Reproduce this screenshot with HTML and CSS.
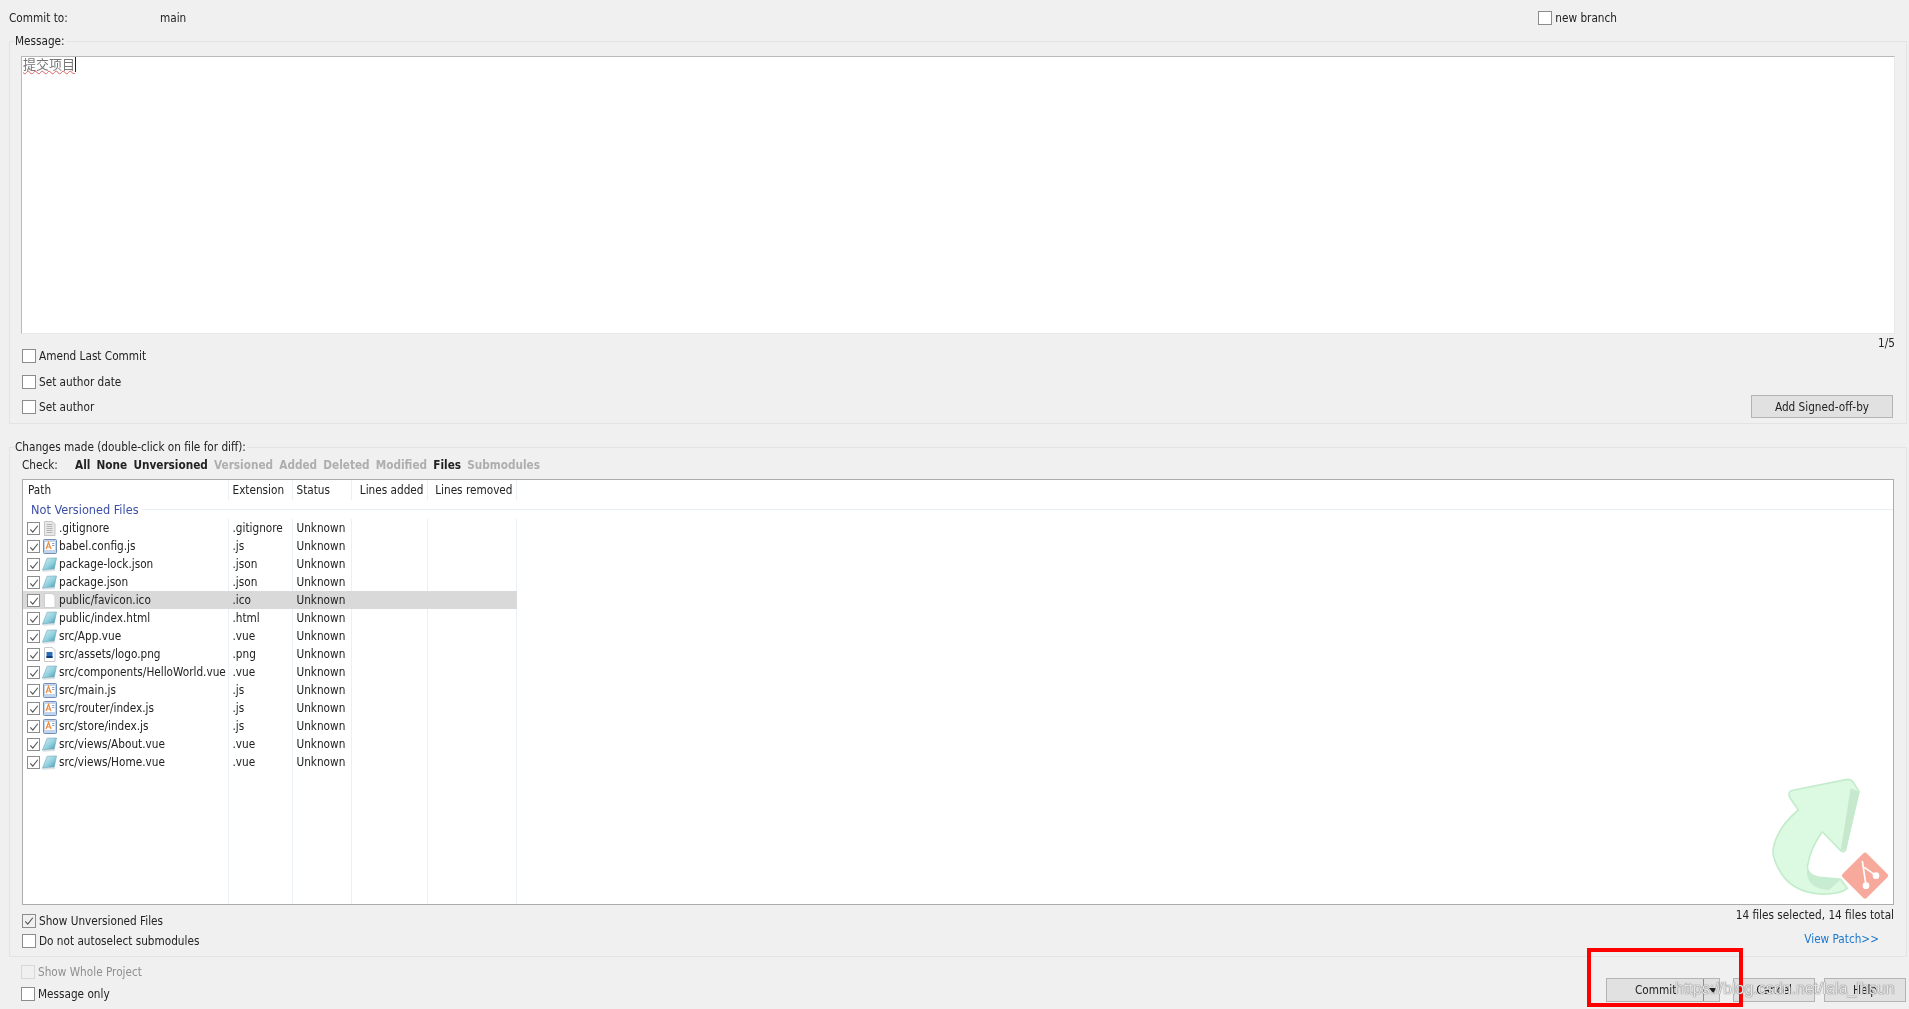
FILE: index.html
```html
<!DOCTYPE html>
<html lang="en">

<head>
    <meta charset="UTF-8">
    <title>Commit</title>
    <link rel="stylesheet" href="styles.css">
</head>

<body>
    <svg class="defs" width="0" height="0">
        <defs>
            <linearGradient id="teal" x1="0" y1="0" x2="1" y2="1">
                <stop offset="0" stop-color="#d8f0f5" />
                <stop offset="0.55" stop-color="#8fd0de" />
                <stop offset="1" stop-color="#3f93ad" />
            </linearGradient>
        </defs>
        <symbol id="tick" viewBox="0 0 13 13">
            <path d="M2.5 6.8 5.2 9.8 10.6 3" fill="none" stroke="#555" stroke-width="1.2" />
        </symbol>
        <symbol id="i-doc" viewBox="0 0 15 15">
            <path d="M2.500 .5h7.500l3 2.500v11.500H2.500z" fill="#e9e9e9" stroke="#c4c4c4" />
            <path d="M4.500 3.500h6M4.500 5.500h6M4.500 7.500h6M4.500 9.500h6M4.500 11.500h6" stroke="#b5b5b5" />
        </symbol>
        <symbol id="i-js" viewBox="0 0 15 15">
            <rect x="1.500" y=".5" width="13" height="14" rx="1" fill="#c3d5ea" stroke="#6f8fb8" />
            <rect x="3" y="3" width="10" height="8" fill="#fff" />
            <path d="M4 10 6.500 3.500 9 10M5 8h3" fill="none" stroke="#ee8a3a" stroke-width="1.2" />
            <path d="M10 4.500h2.500M10 6.500h2.500" stroke="#8aa6c8" />
        </symbol>
        <symbol id="i-vue" viewBox="0 0 16 15">
            <path d="M5.500 .8 15.500 .5 13 12.500 .5 13.500z" fill="url(#teal)" stroke="#6d9fb2" stroke-width=".6" />
            <path d="M.5 13.500 13 12.500 13.500 14 1.500 14.800z" fill="#e4ecf0" stroke="#a9bcc6" stroke-width=".4" />
        </symbol>
        <symbol id="i-ico" viewBox="0 0 15 15">
            <path d="M2.500 .5h7.500l3 2.500v11.500H2.500z" fill="#fff" stroke="#cfcfcf" />
        </symbol>
        <symbol id="i-png" viewBox="0 0 15 15">
            <path d="M2.500 .5h7.500l3 2.500v11.500H2.500z" fill="#fff" stroke="#c9c9c9" />
            <rect x="4.500" y="5" width="6" height="6" fill="#2a6fb5" />
            <rect x="4.500" y="9" width="6" height="2" fill="#123f78" />
        </symbol>
    </svg>

    <div class="commit-row">
        <span class="commit-label">Commit to:</span>
        <span class="branch">main</span>
        <label class="opt new-branch"><span class="box"></span>new branch</label>
    </div>

    <fieldset class="group group-message">
        <legend>Message:</legend>
        <div class="message-box"><span class="typed">提交项目</span><span class="caret"></span></div>
        <div class="counter">1/5</div>
        <div class="message-foot">
            <div class="opts">
                <label class="opt"><span class="box"></span>Amend Last Commit</label>
                <label class="opt"><span class="box"></span>Set author date</label>
                <label class="opt"><span class="box"></span>Set author</label>
            </div>
            <button class="btn btn-sign">Add Signed-off-by</button>
        </div>
    </fieldset>

    <fieldset class="group group-changes">
        <legend>Changes made (double-click on file for diff):</legend>
        <div class="filter">
            <span class="filter-label">Check:</span>
            <b>All</b>
            <b>None</b>
            <b>Unversioned</b>
            <b class="off">Versioned</b>
            <b class="off">Added</b>
            <b class="off">Deleted</b>
            <b class="off">Modified</b>
            <b>Files</b>
            <b class="off">Submodules</b>
        </div>
        <div class="list">
            <table class="files">
                <colgroup>
                    <col class="c-path">
                    <col class="c-ext">
                    <col class="c-status">
                    <col class="c-added">
                    <col class="c-removed">
                    <col>
                </colgroup>
                <tbody>
                    <tr class="head">
                        <td class="h-path">Path</td>
                        <td>Extension</td>
                        <td>Status</td>
                        <td class="num">Lines added</td>
                        <td class="num">Lines removed</td>
                        <td></td>
                    </tr>
                    <tr class="section">
                        <td colspan="6"><div class="section-in"><span>Not Versioned Files</span><i></i></div></td>
                    </tr>
                </tbody>
                <tbody id="rows"></tbody>
                <tbody>
                    <tr class="filler"><td></td><td></td><td></td><td></td><td></td><td></td></tr>
                </tbody>
            </table>
            <svg class="logo" viewBox="0 0 462 432" width="154" height="144">
                <path d="M150 100Q152 92 165 90L325 58Q338 58 345 70L360 95 320 268Q315 280 305 272L250 215Q215 262 205 320 205 345 240 352L305 358 325 385Q300 405 240 402 165 395 130 345 100 300 102 270 112 205 178 150L152 112Z" fill="#dcf9e1" stroke="#c3eccb" stroke-width="5" />
                <path d="M360 95 320 268 305 272 335 85Z" fill="#c6e8cd" />
                <path d="M205 320Q205 345 240 352L305 358 270 390Q195 385 205 320Z" fill="#c8ecd0" />
                <rect x="327" y="296" width="102" height="102" rx="8" transform="rotate(45 378 347)" fill="#f7a99b" />
                <path d="M370 303 381 376M376 322 411 347" stroke="#fff" stroke-width="5" fill="none" />
                <circle cx="381" cy="377" r="10" fill="#fff" />
                <circle cx="411" cy="347" r="10" fill="#fff" />
            </svg>
        </div>
        <div class="changes-foot">
            <div class="opts-tight">
                <label class="opt"><span class="box on"><svg><use href="#tick" /></svg></span>Show Unversioned Files</label>
                <label class="opt"><span class="box"></span>Do not autoselect submodules</label>
            </div>
            <div class="stats">
                <div>14 files selected, 14 files total</div>
                <a class="patch">View Patch&gt;&gt;</a>
            </div>
        </div>
    </fieldset>

    <div class="footer">
        <div class="foot-opts">
            <label class="opt disabled"><span class="box"></span>Show Whole Project</label>
            <label class="opt"><span class="box"></span>Message only</label>
        </div>
        <div class="buttons">
            <button class="btn btn-commit"><span class="btn-main">Commit</span><span class="btn-arrow"></span></button>
            <button class="btn btn-cancel">Cancel</button>
            <button class="btn btn-help">Help</button>
        </div>
    </div>

    <div class="red-mark"></div>
    <div class="watermark">https://blog.csdn.net/lala_lhsun</div>

    <script>
        var files = [
            ['.gitignore', '.gitignore', 'i-doc'],
            ['babel.config.js', '.js', 'i-js'],
            ['package-lock.json', '.json', 'i-vue'],
            ['package.json', '.json', 'i-vue'],
            ['public/favicon.ico', '.ico', 'i-ico'],
            ['public/index.html', '.html', 'i-vue'],
            ['src/App.vue', '.vue', 'i-vue'],
            ['src/assets/logo.png', '.png', 'i-png'],
            ['src/components/HelloWorld.vue', '.vue', 'i-vue'],
            ['src/main.js', '.js', 'i-js'],
            ['src/router/index.js', '.js', 'i-js'],
            ['src/store/index.js', '.js', 'i-js'],
            ['src/views/About.vue', '.vue', 'i-vue'],
            ['src/views/Home.vue', '.vue', 'i-vue']
        ];
        var html = '';
        for (var i = 0; i < files.length; i++) {
            var f = files[i];
            html += '<tr class="' + (i == 4 ? 'row picked' : 'row') + '">' +
                '<td class="pathcell"><div class="pathin"><span class="box small"><svg><use href="#tick" /></svg></span>' +
                '<svg class="ficon"><use href="#' + f[2] + '" /></svg><span>' + f[0] + '</span></div></td>' +
                '<td>' + f[1] + '</td><td>Unknown</td><td></td><td></td><td class="rest"></td></tr>';
        }
        document.getElementById('rows').innerHTML = html;
    </script>
</body>

</html>
```

FILE: styles.css
```css
* {
    box-sizing: border-box;
    padding: 0;
    margin: 0;
}

html,
body {
    height: 100%;
    width: 100%;
    overflow: hidden;
}

body {
    background: #f0f0f0;
    color: #222;
    font-family: "DejaVu Sans Condensed", "DejaVu Sans", "Noto Sans CJK SC", sans-serif;
    font-size: 11.7px;
    line-height: 16px;
    padding: 0 2px 0 9px;
    position: relative;
    filter: blur(0.35px);
}

.defs {
    position: absolute;
}

.commit-row {
    height: 33px;
    display: flex;
    align-items: center;
    padding-top: 3px;
}

.commit-label {
    width: 151px;
}

.new-branch {
    margin-left: auto;
    margin-right: 290px;
}

.opt {
    display: flex;
    align-items: center;
    height: 16px;
}

.box {
    width: 14px;
    height: 14px;
    border: 1px solid #8c8c8c;
    background: #fff;
    margin-right: 3px;
    flex: none;
    display: block;
}

.box svg {
    display: block;
    width: 12px;
    height: 12px;
}

.box.on {
    background: #f0f0f0;
}

.box.small {
    width: 13px;
    height: 13px;
    margin-right: 2px;
}

.group {
    border: 1px solid #e3e3e3;
    min-width: 0;
    padding: 0 11px;
}

.group legend {
    margin-left: -7px;
    padding: 0 1px;
    height: 16px;
    line-height: 17px;
}

.group-message {
    height: 391px;
}

.message-box {
    height: 278px;
    margin-top: 7px;
    background: #fff;
    border: 1px solid #b9b9b9;
    border-bottom-color: #e8e8e8;
    border-right-color: #e8e8e8;
    padding: 0 0 0 1px;
    font-family: "Noto Sans CJK SC", sans-serif;
    font-size: 13px;
    line-height: 14px;
    color: #777;
    display: flex;
    align-items: flex-start;
}

.typed {
    text-decoration: underline wavy #e06060 1px;
}

.caret {
    width: 1px;
    height: 15px;
    background: #222;
}

.counter {
    height: 14px;
    text-align: right;
    line-height: 18px;
}

.message-foot {
    display: flex;
    justify-content: space-between;
    align-items: flex-start;
}

.opts {
    display: flex;
    flex-direction: column;
    gap: 9.500px;
    padding-left: 1px;
}

.btn {
    font: inherit;
    color: #222;
    background: #e1e1e1;
    border: 1px solid #b4b4b4;
}

.btn-sign {
    width: 142px;
    height: 23px;
    margin: 47px 2px 0 0;
}

.group-changes {
    height: 518px;
    margin-top: 15px;
}

.filter {
    height: 20px;
    display: flex;
    align-items: center;
    padding-left: 1px;
}

.filter-label {
    width: 53px;
}

.filter b {
    margin-right: 6.200px;
}

.filter .off {
    color: #aeaeae;
}

.list {
    height: 426px;
    margin: 4px 1px 0;
    background: #fff;
    border: 1px solid #adadad;
    position: relative;
}

.files {
    width: 100%;
    height: 100%;
    table-layout: fixed;
    border-collapse: collapse;
}

.c-path {
    width: 205px;
}

.c-ext {
    width: 64px;
}

.c-status {
    width: 59px;
}

.c-added {
    width: 76px;
}

.c-removed {
    width: 89px;
}

.files td {
    border-right: 1px solid #e9f0f8;
    padding: 0 3px 0 4px;
    white-space: nowrap;
    overflow: hidden;
}

.files td:last-child {
    border-right: 0;
}

.head {
    height: 20px;
}

.files .h-path {
    padding-left: 5px;
}

.files .num {
    text-align: right;
}

.section {
    height: 19px;
}

.files .section td {
    padding: 0 0 0 8px;
    border: 0;
}

.section-in {
    display: flex;
    align-items: center;
    color: #3c4fa5;
    font-size: 12.600px;
}

.section-in i {
    flex: 1;
    height: 1px;
    background: #e6eff8;
    margin-left: 3px;
}

.row {
    height: 18px;
}

.files .pathcell {
    padding: 0 0 0 4px;
}

.pathin {
    display: flex;
    align-items: center;
    height: 18px;
}

.ficon {
    width: 15px;
    height: 15px;
    margin-right: 2px;
    flex: none;
}

.picked td {
    background: #d9d9d9;
    border-right-color: #d9d9d9;
}

.picked td.rest {
    background: #fff;
}

.filler {
    height: 133px;
}

.logo {
    position: absolute;
    right: 0;
    bottom: 0;
}

.changes-foot {
    display: flex;
    justify-content: space-between;
    padding: 0 1px;
}

.opts-tight {
    padding-top: 8px;
    display: flex;
    flex-direction: column;
    gap: 4px;
}

.stats {
    text-align: right;
    padding-top: 2px;
}

.patch {
    display: block;
    color: #1c78d0;
    margin: 8px 15px 0 0;
}

.footer {
    display: flex;
    justify-content: space-between;
    padding-left: 12px;
}

.foot-opts {
    padding-top: 7px;
    display: flex;
    flex-direction: column;
    gap: 6px;
}

.disabled {
    color: #8f8f8f;
}

.disabled .box {
    background: #f0f0f0;
    border-color: #d8d8d8;
}

.buttons {
    display: flex;
    padding-top: 21px;
}

.buttons .btn {
    height: 24px;
}

.btn-commit {
    width: 114px;
    display: flex;
    align-items: center;
    padding-left: 28px;
    margin-right: 13px;
}

.btn-main {
    width: 69px;
    height: 22px;
    line-height: 22px;
    border-right: 1px solid #8d8d8d;
    text-align: center;
    padding-right: 28px;
}

.btn-arrow {
    margin-left: 5px;
    border: 4px solid transparent;
    border-top: 5px solid #222;
    border-bottom: 0;
}

.btn-cancel {
    width: 82px;
    margin-right: 9px;
}

.btn-help {
    width: 82px;
    margin-right: 1px;
}

.red-mark {
    position: absolute;
    left: 1587px;
    top: 948px;
    width: 156px;
    height: 59px;
    border: 4px solid #f00;
}

.watermark {
    position: absolute;
    left: 1675px;
    top: 979px;
    font-family: "Liberation Sans", sans-serif;
    font-size: 16px;
    line-height: 20px;
    color: rgba(255, 255, 255, 0.85);
    text-shadow: 0 0 1px #555, 0 0 1px #888;
    white-space: nowrap;
}
```
